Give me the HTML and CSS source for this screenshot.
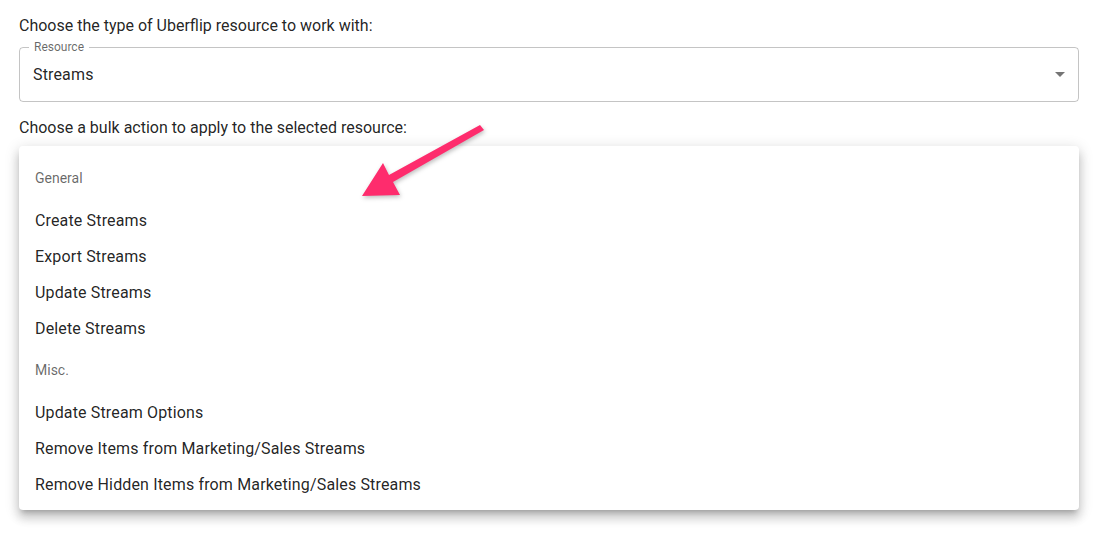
FILE: index.html
```html
<!DOCTYPE html>
<html lang="en">
<head>
    <meta charset="UTF-8">
    <title>Bulk actions</title>
    <link rel="stylesheet" href="styles.css">
</head>
<body>
    <main class="page">
        <p class="prompt">Choose the type of Uberflip resource to work with:</p>
        <div class="field">
            <fieldset class="field-outline">
                <legend>Resource</legend>
            </fieldset>
            <span class="field-value">Streams</span>
            <svg class="field-arrow" viewBox="0 0 24 24" width="24" height="24"><path d="M7 10l5 5 5-5z"/></svg>
        </div>

        <p class="prompt prompt-action">Choose a bulk action to apply to the selected resource:</p>
        <div class="field">
            <fieldset class="field-outline">
                <legend>Action</legend>
            </fieldset>
            <span class="field-value"></span>
        </div>

        <!-- menu ouvert par-dessus le second champ -->
        <ul class="menu">
            <li class="menu-subheader">General</li>
            <li class="menu-item">Create Streams</li>
            <li class="menu-item">Export Streams</li>
            <li class="menu-item">Update Streams</li>
            <li class="menu-item">Delete Streams</li>
            <li class="menu-subheader">Misc.</li>
            <li class="menu-item">Update Stream Options</li>
            <li class="menu-item">Remove Items from Marketing/Sales Streams</li>
            <li class="menu-item">Remove Hidden Items from Marketing/Sales Streams</li>
        </ul>

        <svg class="callout-arrow" viewBox="0 0 1113 535" width="1113" height="535">
            <polygon points="480,125 484,130 393,182 400,195 362,196 383,163 389,175"/>
        </svg>
    </main>
</body>
</html>
```

FILE: styles.css
```css
body {
    margin: 0;
    font-family: Roboto, "Noto Sans", Arial, sans-serif;
    background-color: #fff;
    color: rgba(0, 0, 0, 0.87);
}

.page {
    position: relative;
    width: 1060px;
    min-height: 535px;
    margin-left: 19px;
    padding-top: 14px;
    box-sizing: border-box;
}

.prompt {
    margin: 0 0 8px;
    font-size: 16px;
    line-height: 24px;
}

.prompt-action {
    margin-bottom: 10px;
}

.field {
    position: relative;
    height: 56px;
    display: flex;
    align-items: center;
    padding: 2px 14px 0;
    margin-bottom: 14px;
    box-sizing: border-box;
}

.field-outline {
    position: absolute;
    inset: -5px 0 0 0;
    margin: 0;
    padding: 0 8px;
    border: 1px solid rgba(0, 0, 0, 0.23);
    border-radius: 4px;
    pointer-events: none;
}

.field-outline legend {
    padding: 0 5px;
    margin-left: 1px;
    font-size: 12px;
    line-height: 12px;
    color: rgba(0, 0, 0, 0.6);
}

.field-value {
    font-size: 16px;
    line-height: 24px;
    letter-spacing: 0.15px;
}

.field-arrow {
    position: absolute;
    right: 7px;
    top: 16px;
    fill: rgba(0, 0, 0, 0.54);
}

.menu {
    position: absolute;
    left: 0;
    top: 146px;
    width: 1060px;
    margin: 0;
    padding: 8px 0;
    list-style: none;
    background-color: #fff;
    border-radius: 4px;
    box-shadow: 0 5px 5px -3px rgba(0, 0, 0, 0.2),
                0 8px 10px 1px rgba(0, 0, 0, 0.14),
                0 3px 14px 2px rgba(0, 0, 0, 0.12);
}

.menu-subheader {
    padding: 0 16px;
    font-size: 14px;
    line-height: 48px;
    color: rgba(0, 0, 0, 0.6);
}

.menu-item {
    padding: 7px 16px 5px;
    font-size: 16px;
    line-height: 24px;
    letter-spacing: 0.15px;
}

.callout-arrow {
    position: absolute;
    left: -19px;
    top: 0;
    fill: #fe2c6d;
    filter: drop-shadow(1px 2px 2px rgba(0, 0, 0, 0.25));
    pointer-events: none;
}
```
